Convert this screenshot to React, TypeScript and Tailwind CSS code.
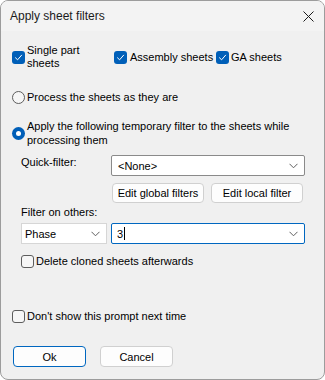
import React from "react";

const font = { fontFamily: '"Liberation Sans", Arial, sans-serif' };

function Check({ checked }: { checked: boolean }) {
  if (checked) {
    return (
      <span className="flex h-[13px] w-[13px] shrink-0 items-center justify-center rounded-[3px] bg-[#005fb8]">
        <svg width="9" height="9" viewBox="0 0 9 9" fill="none">
          <path d="M1.5 4.8 L3.6 6.8 L7.6 2.2" stroke="#fff" strokeWidth="1" strokeLinecap="round" strokeLinejoin="round" />
        </svg>
      </span>
    );
  }
  return <span className="h-[13px] w-[13px] shrink-0 rounded-[3px] border border-[#5d5d5d] bg-[#f6f6f6]" />;
}

function Radio({ checked }: { checked: boolean }) {
  if (checked) {
    return (
      <span className="flex h-[13px] w-[13px] shrink-0 items-center justify-center rounded-full bg-[#005fb8]">
        <span className="h-[5px] w-[5px] rounded-full bg-white" />
      </span>
    );
  }
  return <span className="h-[13px] w-[13px] shrink-0 rounded-full border border-[#5d5d5d] bg-[#f6f6f6]" />;
}

function Chevron() {
  return (
    <svg width="9" height="6" viewBox="0 0 9 6" fill="none">
      <path d="M0.5 0.8 L4.5 4.8 L8.5 0.8" stroke="#5f5f5f" strokeWidth="1" />
    </svg>
  );
}

export default function App() {
  return (
    <div className="h-[380px] w-[325px] bg-white" style={font}>
      <div className="flex h-[380px] w-[325px] flex-col overflow-hidden rounded-[8px] border border-[#9c9c9c] bg-[#f0f0f0] text-[11px] leading-[14px] text-black">
        <div className="flex h-[30px] shrink-0 items-center justify-between bg-[#f3f3f3] pl-[9px] pr-[10px]">
          <span className="text-[12px] text-[#1b1b1b]">Apply sheet filters</span>
          <svg width="11" height="11" viewBox="0 0 11 11" fill="none">
            <path d="M0.5 0.5 L10.5 10.5 M10.5 0.5 L0.5 10.5" stroke="#1b1b1b" strokeWidth="1" />
          </svg>
        </div>

        <div className="flex flex-col pl-[11px]">
          <div className="mt-[13px] flex items-center">
            <div className="flex w-[102px] items-center gap-[2px]">
              <Check checked />
              <span className="w-[70px] leading-[13px]">Single part sheets</span>
            </div>
            <div className="flex w-[102px] items-center gap-[3px]">
              <Check checked />
              <span>Assembly sheets</span>
            </div>
            <div className="flex items-center gap-[2px]">
              <Check checked />
              <span>GA sheets</span>
            </div>
          </div>

          <div className="mt-[20px] flex items-center gap-[2px]">
            <Radio checked={false} />
            <span>Process the sheets as they are</span>
          </div>

          <div className="mt-[15px] flex items-center gap-[2px]">
            <Radio checked />
            <span className="w-[275px]">Apply the following temporary filter to the sheets while processing them</span>
          </div>

          <div className="flex flex-col pl-[9px]">
            <div className="mt-[8px] flex items-start">
              <span className="w-[90px]">Quick-filter:</span>
              <div className="flex h-[21px] w-[194px] items-center justify-between rounded-[2px] border border-[#8a8a8a] bg-white pl-[6px] pr-[6px]">
                <span>&lt;None&gt;</span>
                <Chevron />
              </div>
            </div>

            <div className="mt-[7px] flex gap-[7px] pl-[91px]">
              <div className="flex h-[20px] w-[92px] items-center justify-center rounded-[4px] border border-[#d0d0d0] bg-[#fdfdfd]">
                Edit global filters
              </div>
              <div className="flex h-[20px] w-[92px] items-center justify-center rounded-[4px] border border-[#d0d0d0] bg-[#fdfdfd]">
                Edit local filter
              </div>
            </div>

            <div className="mt-[2px]">Filter on others:</div>

            <div className="mt-[4px] flex gap-[4px]">
              <div className="flex h-[21px] w-[86px] items-center justify-between border border-[#d6d6d6] bg-white pl-[3px] pr-[6px]">
                <span>Phase</span>
                <Chevron />
              </div>
              <div className="flex h-[21px] w-[194px] items-center justify-between rounded-[2px] border border-[#0067c0] bg-white pl-[5px] pr-[6px]">
                <span className="flex items-center">
                  3<span className="ml-[1px] h-[13px] w-[1px] bg-black" />
                </span>
                <Chevron />
              </div>
            </div>

            <div className="mt-[10px] flex items-center gap-[2px]">
              <Check checked={false} />
              <span>Delete cloned sheets afterwards</span>
            </div>
          </div>

          <div className="mt-[41px] flex items-center gap-[2px]">
            <Check checked={false} />
            <span>Don't show this prompt next time</span>
          </div>

          <div className="mt-[23px] flex gap-[14px] pl-[1px]">
            <div className="flex h-[21px] w-[73px] items-center justify-center rounded-[4px] border border-[#0067c0] bg-[#fdfdfd]">
              Ok
            </div>
            <div className="flex h-[21px] w-[73px] items-center justify-center rounded-[4px] border border-[#d0d0d0] bg-[#fdfdfd]">
              Cancel
            </div>
          </div>
        </div>
      </div>
    </div>
  );
}
